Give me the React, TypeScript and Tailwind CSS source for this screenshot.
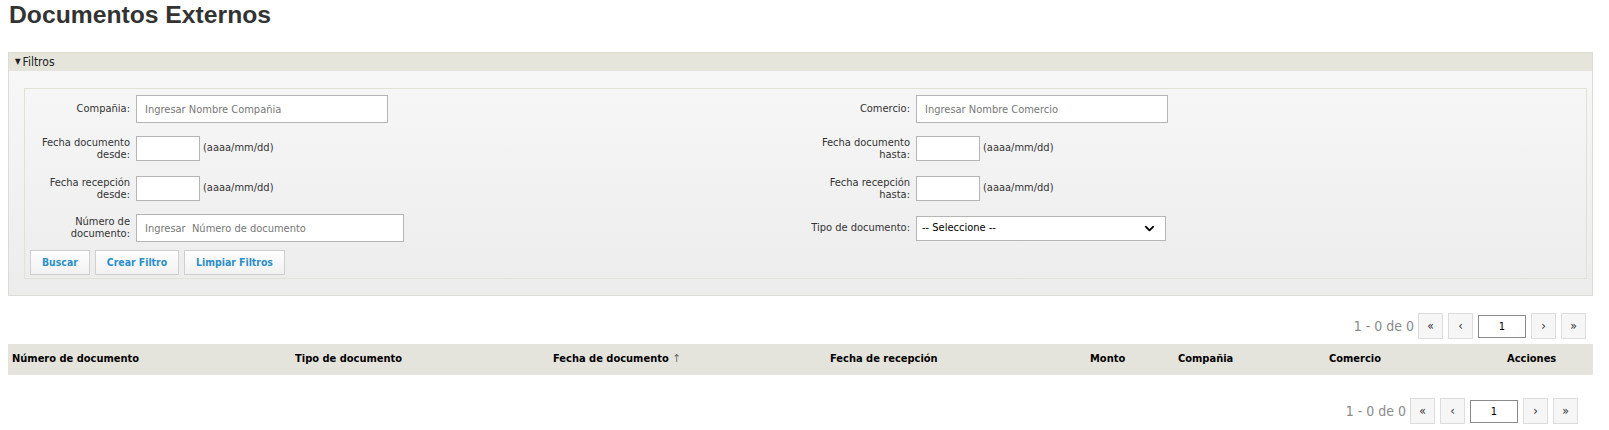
import { ChevronDown } from 'lucide-react';

const font = { fontFamily: '"DejaVu Sans Condensed", "DejaVu Sans", sans-serif' };

const Label = ({ children, w }: { children: React.ReactNode; w: string }) => (
  <div className={`${w} shrink-0 text-right text-[11px] leading-[12px] text-[#333]`}>{children}</div>
);

const DateField = () => (
  <div className="ml-[6px] flex items-center">
    <input className="h-[25px] w-[64px] border border-[#b5b5b5] bg-white outline-none" />
    <span className="ml-[3px] text-[11px] text-[#333]">(aaaa/mm/dd)</span>
  </div>
);

const Pager = ({ className }: { className?: string }) => (
  <div className={`flex items-center justify-end gap-[5px] ${className ?? ''}`}>
    <span className="mr-[-1px] text-[14px] text-[#8a8a8a]">1 - 0 de 0</span>
    <button className="flex h-[26px] w-[25px] items-center justify-center border border-[#ddd] bg-[#f6f6f6] text-[12px] text-[#333]">«</button>
    <button className="flex h-[26px] w-[25px] items-center justify-center border border-[#ddd] bg-[#f6f6f6] text-[13px] text-[#333]">‹</button>
    <input
      readOnly
      value="1"
      className="h-[23px] w-[48px] border border-[#8a8a8a] bg-white text-center text-[11px] text-black outline-none"
    />
    <button className="flex h-[26px] w-[25px] items-center justify-center border border-[#ddd] bg-[#f6f6f6] text-[13px] text-[#333]">›</button>
    <button className="flex h-[26px] w-[25px] items-center justify-center border border-[#ddd] bg-[#f6f6f6] text-[12px] text-[#333]">»</button>
  </div>
);

const btn =
  'h-[25px] border border-[#cfcfcf] bg-gradient-to-b from-white to-[#f1f1f1] px-[11px] text-[10.4px] font-bold text-[#2a8fc9]';

export default function App() {
  return (
    <div className="min-h-[430px] bg-white" style={font}>
      <h1
        className="pl-[9px] pt-[1px] text-[24.7px] font-bold leading-[28px] text-[#333]"
        style={{ fontFamily: '"Liberation Sans", Arial, sans-serif' }}
      >
        Documentos Externos
      </h1>

      <div className="ml-[8px] mr-[16px] mt-[23px]">
        {/* Filtros */}
        <div className="border border-[#dcdcd4]">
          <div className="flex h-[18px] items-center bg-[#e6e5dc] pl-[6px] text-[12px] text-[#222]">
            <span className="mr-[2px] text-[8px]">▼</span>Filtros
          </div>
          <div className="bg-gradient-to-b from-[#f7f7f7] to-[#ececec] pb-[16px] pl-[15px] pr-[5px] pt-[17px]">
            <div className="border border-[#e2e1d8] pb-[3px] pt-[6px]">
              <div className="flex h-[28px] items-center">
                <div className="flex w-[775px] items-center">
                  <Label w="w-[105px]">Compañia:</Label>
                  <input
                    placeholder="Ingresar Nombre Compañia"
                    className="ml-[6px] h-[28px] w-[252px] border border-[#b5b5b5] bg-white px-[8px] text-[11px] outline-none placeholder:text-[#777]"
                  />
                </div>
                <div className="flex items-center">
                  <Label w="w-[110px]">Comercio:</Label>
                  <input
                    placeholder="Ingresar Nombre Comercio"
                    className="ml-[6px] h-[28px] w-[252px] border border-[#b5b5b5] bg-white px-[8px] text-[11px] outline-none placeholder:text-[#777]"
                  />
                </div>
              </div>

              <div className="mt-[13px] flex h-[25px] items-center">
                <div className="flex w-[775px] items-center">
                  <Label w="w-[105px]">
                    Fecha documento
                    <br />
                    desde:
                  </Label>
                  <DateField />
                </div>
                <div className="flex items-center">
                  <Label w="w-[110px]">
                    Fecha documento
                    <br />
                    hasta:
                  </Label>
                  <DateField />
                </div>
              </div>

              <div className="mt-[15px] flex h-[25px] items-center">
                <div className="flex w-[775px] items-center">
                  <Label w="w-[105px]">
                    Fecha recepción
                    <br />
                    desde:
                  </Label>
                  <DateField />
                </div>
                <div className="flex items-center">
                  <Label w="w-[110px]">
                    Fecha recepción
                    <br />
                    hasta:
                  </Label>
                  <DateField />
                </div>
              </div>

              <div className="mt-[13px] flex h-[28px] items-center">
                <div className="flex w-[775px] items-center">
                  <Label w="w-[105px]">
                    Número de
                    <br />
                    documento:
                  </Label>
                  <input
                    placeholder="Ingresar  Número de documento"
                    className="ml-[6px] h-[28px] w-[268px] border border-[#b5b5b5] bg-white px-[8px] text-[11px] outline-none placeholder:text-[#777]"
                  />
                </div>
                <div className="flex items-center">
                  <Label w="w-[110px]">Tipo de documento:</Label>
                  <div className="ml-[6px] flex h-[25px] w-[250px] items-center justify-between border border-[#b5b5b5] bg-white pl-[5px] pr-[8px] text-[11px] text-black">
                    <span>-- Seleccione --</span>
                    <ChevronDown size={15} strokeWidth={3} className="text-black" />
                  </div>
                </div>
              </div>

              <div className="ml-[5px] mt-[8px] flex gap-[5px]">
                <button className={btn}>Buscar</button>
                <button className={btn}>Crear Filtro</button>
                <button className={btn}>Limpiar Filtros</button>
              </div>
            </div>
          </div>
        </div>

        <Pager className="mt-[17px] pr-[7px]" />

        <div className="mt-[5px] grid h-[31px] grid-cols-[283px_258px_277px_260px_88px_151px_178px_1fr] items-center bg-[#e5e4dc] pl-[4px] text-[11px] font-bold text-black">
          <div>Número de documento</div>
          <div>Tipo de documento</div>
          <div>
            Fecha de documento <span className="font-normal text-[#666]">↑</span>
          </div>
          <div>Fecha de recepción</div>
          <div>Monto</div>
          <div>Compañia</div>
          <div>Comercio</div>
          <div>Acciones</div>
        </div>

        <Pager className="mt-[23px] pr-[15px]" />
      </div>
    </div>
  );
}
